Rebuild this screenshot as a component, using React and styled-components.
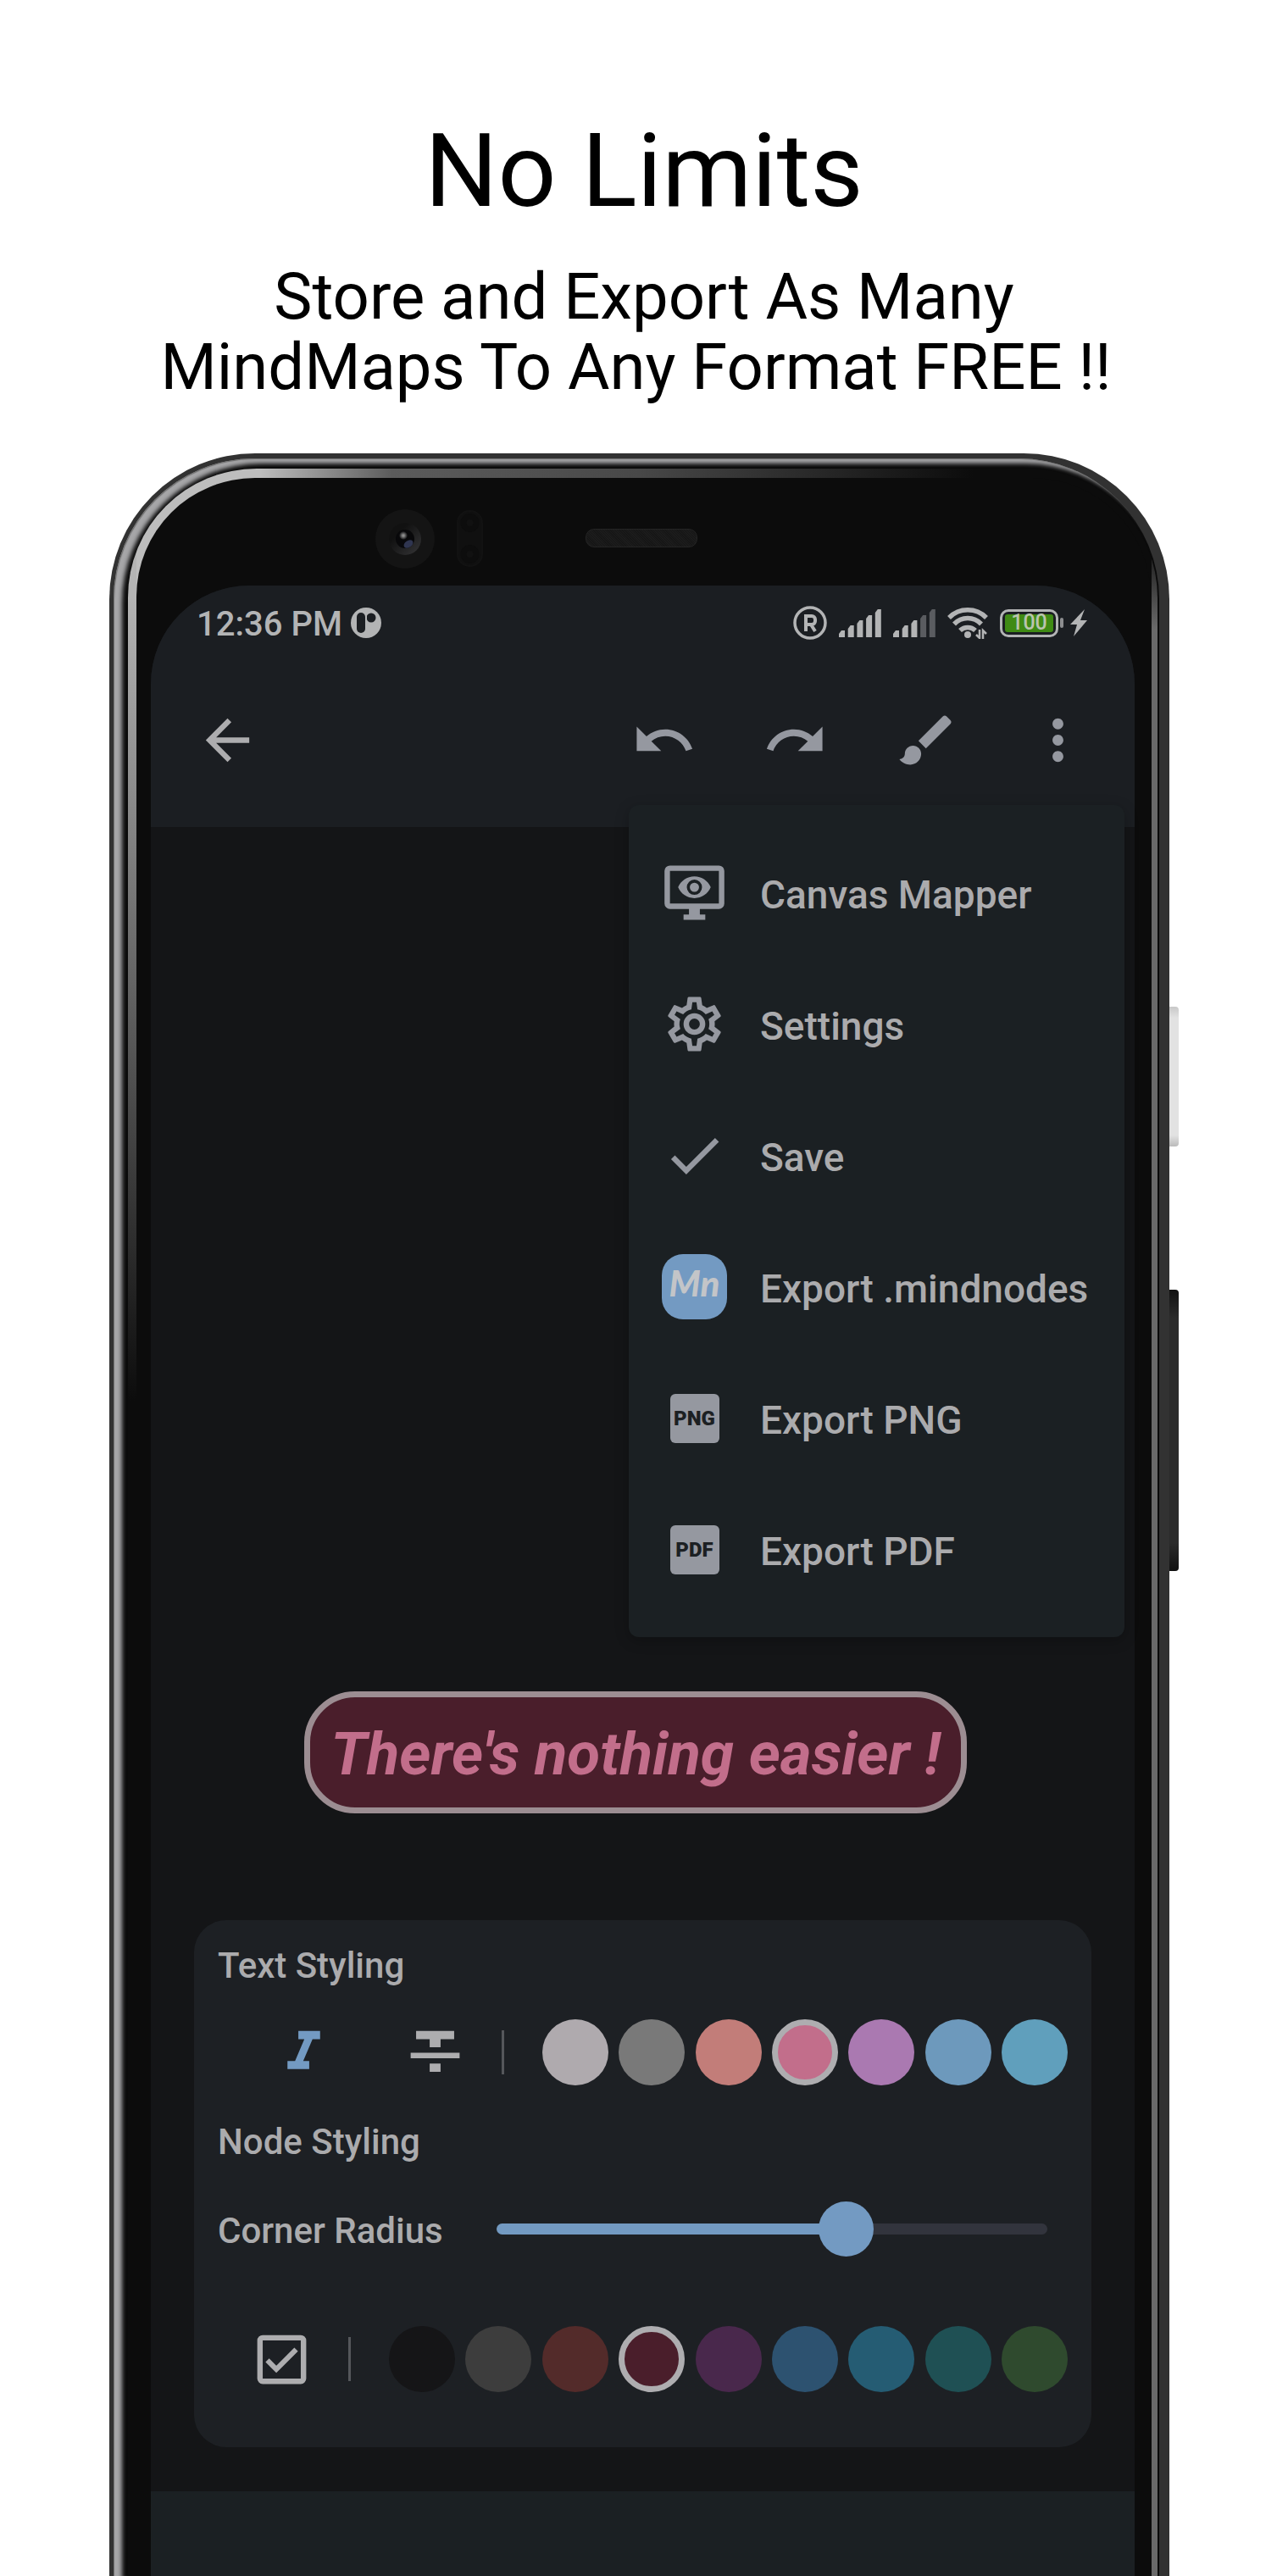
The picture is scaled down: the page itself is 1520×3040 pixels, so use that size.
import React, { useState } from "react";
import styled, { createGlobalStyle, css } from "styled-components";
import {
  MdArrowBack,
  MdUndo,
  MdRedo,
  MdBrush,
  MdMoreVert,
  MdCheck,
  MdFormatItalic,
  MdFormatStrikethrough,
} from "react-icons/md";

const color = {
  bar: "#1b1e22",
  canvas: "#141517",
  menu: "#1b2023",
  panel: "#1d2024",
  icon: "#9598a0",
  text: "#ababad",
  accent: "#739ac2",
};

const GlobalStyle = createGlobalStyle`
  *, *::before, *::after { box-sizing: border-box; }
  body { margin: 0; background: #fff; font-family: Roboto, "Noto Sans", sans-serif; }
  button { font: inherit; color: inherit; background: none; border: 0; padding: 0; cursor: pointer; }
`;

/* ---------- page ---------- */

const Page = styled.div`
  min-height: 100vh;
  display: flex;
  flex-direction: column;
  overflow: hidden;
`;

const Hero = styled.header`
  padding: 130px 40px 0;
  text-align: center;
  color: #000;
`;

const Title = styled.h1`
  margin: 0;
  font-size: 121px;
  line-height: 144px;
  font-weight: 400;
`;

const Subtitle = styled.p`
  margin: 35px 0 0;
  font-size: 76px;
  line-height: 83px;
`;

/* ---------- phone ---------- */

const Device = styled.div`
  flex: 1;
  display: flex;
  padding: 0 129px;
  margin-top: 60px;
`;

const Shell = styled.div`
  flex: 1;
  min-width: 0;
  display: flex;
  padding: 6px 12px 0 5px;
  border-radius: 172px 172px 0 0;
  background: #323232;
`;

const Rim = styled.div`
  flex: 1;
  min-width: 0;
  display: flex;
  padding: 12px 2px 0 17px;
  border-radius: 166px 166px 0 0;
  background: #0a0a0a;
  box-shadow: inset 1px 1px 1px #707070, inset 9px 5px 5px 1px #a6a6a8;
`;

const Reflection = styled.div`
  flex: 1;
  min-width: 0;
  display: flex;
  padding: 11px 8px 0 10px;
  border-radius: 152px 152px 0 0;
  background:
    linear-gradient(to bottom, #b4b4b4 150px, #808080 450px, #0c0c0c 1100px) 0 0 / 10px 100% no-repeat,
    linear-gradient(to bottom, transparent 80px, #6a6a6a 190px) 100% 0 / 7px 100% no-repeat,
    radial-gradient(1040px 1060px at 0 0, #bdbdbd 15%, #5c5c5c 30%, #484848 58%, #0c0c0c 96%),
    #0c0c0c;
`;

const Glass = styled.div`
  flex: 1;
  min-width: 0;
  display: flex;
  flex-direction: column;
  padding: 0 19px 0 17px;
  border-radius: 140px 140px 0 0;
  background: #0c0c0c;
`;

const SensorBar = styled.div`
  height: 127px;
  display: grid;
  grid-template-columns: 1fr auto 1fr;
  align-items: center;
  padding: 0 4px 4px 0;
`;

const CameraGroup = styled.div`
  display: flex;
  justify-content: flex-end;
  align-items: center;
  gap: 26px;
  padding: 20px 121px 0 0;
`;

const SpeakerGrille = styled.div`
  width: 132px;
  height: 22px;
  margin-top: 18px;
  border-radius: 10px;
  border: 1px solid #242424;
  background: repeating-linear-gradient(45deg, #1c1c1c 0 1px, #161616 1px 2px);
`;

const SideKeys = styled.div`
  width: 11px;
  display: flex;
  flex-direction: column;
  gap: 169px;
  padding-top: 653px;
`;

const SideKey = styled.span`
  display: block;
  height: ${(p) => p.$height}px;
  border-radius: 0 4px 4px 0;
  background: ${(p) => p.$background};
`;

const Screen = styled.main`
  flex: 1;
  display: flex;
  flex-direction: column;
  position: relative;
  border-radius: 116px 116px 0 0;
  background: ${color.canvas};
`;

/* ---------- status bar and toolbar ---------- */

const TopBar = styled.div`
  display: flex;
  flex-direction: column;
  height: 285px;
  border-radius: 116px 116px 0 0;
  background: ${color.bar};
`;

const StatusBar = styled.div`
  height: 80px;
  padding: 8px 56px 0 54px;
  display: flex;
  justify-content: space-between;
  align-items: center;
  color: #b3b4b5;
`;

const StatusGroup = styled.div`
  display: flex;
  align-items: center;
  gap: ${(p) => p.$gap}px;
`;

const Clock = styled.span`
  padding-top: 4px;
  font-size: 40px;
  line-height: 48px;
  font-weight: 500;
`;

const Battery = styled.span`
  width: 69px;
  height: 33px;
  padding: 3px;
  border: 3px solid #b3b4b5;
  border-radius: 10px;
  display: flex;
`;

const BatteryLevel = styled.span`
  flex: 1;
  display: flex;
  align-items: center;
  justify-content: center;
  border-radius: 3px;
  background: #3f8a14;
  color: #b9c4ae;
  font-size: 25px;
  line-height: 20px;
  font-weight: 500;
`;

const BatteryTip = styled.span`
  width: 4px;
  height: 12px;
  margin: 0 8px 0 2px;
  border-radius: 2px;
  background: #8d8e90;
`;

const BatteryGroup = styled.span`
  display: flex;
  align-items: center;
`;

const Toolbar = styled.nav`
  flex: 1;
  display: flex;
  align-items: center;
  justify-content: space-between;
  padding: 0 52px;
  color: ${color.icon};
`;

const ToolGroup = styled.div`
  display: flex;
  gap: 78px;
`;

const IconButton = styled.button`
  width: 77px;
  height: 77px;
  display: flex;
  color: ${(p) => p.$color || "inherit"};
  svg { width: 77px; height: 77px; }
`;

/* ---------- overflow menu ---------- */

const Menu = styled.ul`
  position: absolute;
  top: 259px;
  right: 12px;
  width: 585px;
  margin: 0;
  padding: 26px 0;
  list-style: none;
  border-radius: 12px;
  background: ${color.menu};
  box-shadow: 0 4px 16px rgba(0, 0, 0, 0.25);
`;

const MenuButton = styled.button`
  width: 100%;
  height: 155px;
  display: flex;
  align-items: center;
  gap: 39px;
  padding: 0 39px;
  text-align: left;
  color: ${color.text};
  white-space: nowrap;
`;

const MenuText = styled.span`
  padding-top: 4px;
  font-size: 46px;
  line-height: 56px;
  font-weight: 500;
`;

const MenuIcon = styled.span`
  width: 77px;
  height: 77px;
  flex: none;
  display: flex;
  align-items: center;
  justify-content: center;
  color: ${color.icon};
  > svg { width: 77px; height: 77px; }
`;

const AppLogo = styled.span`
  width: 77px;
  height: 77px;
  display: flex;
  align-items: center;
  justify-content: center;
  padding-bottom: 10px;
  border-radius: 25px;
  background: #739ac2;
  color: #c3c5c8;
  font-family: Lato, sans-serif;
  font-size: 42px;
  line-height: 48px;
  font-weight: 900;
  font-style: italic;
`;

const FileBadge = styled.span`
  width: 58px;
  height: 58px;
  display: flex;
  align-items: center;
  justify-content: center;
  border-radius: 6px;
  background: ${color.icon};
  color: #1c2023;
  font-size: 24px;
  line-height: 28px;
  font-weight: 900;
`;

/* ---------- canvas ---------- */

const Canvas = styled.section`
  flex: 1;
  display: flex;
  flex-direction: column;
  padding: 1020px 51px 51px;
`;

const MindNode = styled.div`
  align-self: center;
  margin: 0 17px 126px 0;
  padding: 38px 24px 34px;
  border: 7px solid #9c8d92;
  border-radius: 60px;
  background: #4a1e2b;
  color: #c26e8b;
  font-size: 71px;
  line-height: 58px;
  font-weight: 700;
  font-style: italic;
  white-space: nowrap;
`;

const StylePanel = styled.section`
  display: flex;
  flex-direction: column;
  gap: 2px;
  padding: 20px 28px 22px;
  border-radius: 38px;
  background: ${color.panel};
  color: ${color.text};
`;

const labelText = css`
  margin: 0;
  font-size: 42px;
  line-height: 60px;
  font-weight: 500;
`;

const PanelHeading = styled.h2`
  ${labelText}
  padding-top: 4px;
`;

const PanelRow = styled.div`
  height: ${(p) => p.$height}px;
  display: flex;
  align-items: center;
  justify-content: flex-end;
`;

const FormatGroup = styled.div`
  display: flex;
  gap: 78px;
  margin-right: 40px;
`;

const Divider = styled.span`
  width: 3px;
  height: 52px;
  margin-right: 45px;
  background: #55575b;
`;

const Swatches = styled.div`
  width: ${(p) => p.$width}px;
  display: flex;
  justify-content: space-between;
`;

const Swatch = styled.button`
  width: 78px;
  height: 78px;
  border-radius: 50%;
  background: ${(p) => p.$color};
  border: ${(p) => (p.$selected ? "7px solid #aeadb0" : "0")};
`;

const SliderLabel = styled.label`
  ${labelText}
  padding-top: 6px;
  margin-right: auto;
`;

const Slider = styled.input`
  appearance: none;
  width: 650px;
  height: 65px;
  margin: 0 24px 0 0;
  background: none;
  cursor: pointer;

  &::-webkit-slider-runnable-track {
    height: 13px;
    border-radius: 7px;
    background: linear-gradient(to right, ${color.accent} 64%, #32343d 64%);
  }
  &::-webkit-slider-thumb {
    appearance: none;
    width: 65px;
    height: 65px;
    margin-top: -26px;
    border-radius: 50%;
    background: ${color.accent};
  }
`;

const CheckLabel = styled.label`
  position: relative;
  width: 77px;
  height: 77px;
  margin-right: 40px;
  color: #adadaf;
  svg { display: block; width: 77px; height: 77px; }
`;

const CheckInput = styled.input`
  position: absolute;
  inset: 0;
  width: 100%;
  height: 100%;
  margin: 0;
  opacity: 0;
  cursor: pointer;
`;

const BottomBar = styled.footer`
  height: 100px;
  background: ${color.menu};
`;

/* ---------- drawings ---------- */

const Camera = () => (
  <svg width="70" height="70" viewBox="0 0 70 70" aria-hidden="true">
    <defs>
      <linearGradient id="lens" x1="0" y1="0" x2="1" y2="1">
        <stop offset="0.3" stopColor="#111" />
        <stop offset="1" stopColor="#363638" />
      </linearGradient>
      <radialGradient id="glint">
        <stop offset="0.2" stopColor="#8c8c8c" />
        <stop offset="1" stopColor="#0a0a0c" />
      </radialGradient>
    </defs>
    <circle cx="35" cy="35" r="35" fill="#141414" />
    <circle cx="35" cy="35" r="19" fill="url(#lens)" />
    <circle cx="35" cy="35" r="11" fill="#08080a" />
    <circle cx="33" cy="31" r="5" fill="url(#glint)" />
    <ellipse cx="39" cy="41" rx="6" ry="4" fill="#2f3550" transform="rotate(-35 39 41)" />
  </svg>
);

const Sensor = () => (
  <svg width="31" height="67" viewBox="0 0 31 67" aria-hidden="true">
    <rect x="1" y="1" width="29" height="65" rx="14" fill="#101010" stroke="#121212" strokeWidth="2" />
    <circle cx="15.500" cy="15" r="11" fill="#0d0d0d" />
    <circle cx="15.500" cy="52" r="11" fill="#0d0d0d" />
    <circle cx="15.500" cy="15" r="4" fill="#111111" />
    <circle cx="15.500" cy="52" r="4" fill="#111111" />
  </svg>
);

const CarrierDisc = () => (
  <svg width="36" height="36" viewBox="0 0 36 36" aria-hidden="true">
    <circle cx="18" cy="18" r="18" fill="currentColor" />
    <rect x="7" y="6" width="10" height="24" rx="5" fill={color.bar} />
    <circle cx="24" cy="12" r="5.500" fill={color.bar} />
    <path d="M17 6h2v24h-2z" fill="currentColor" />
  </svg>
);

const Registered = () => (
  <svg width="40" height="40" viewBox="0 0 40 40" fill="none" stroke="currentColor" strokeWidth="3.500" aria-hidden="true">
    <circle cx="20" cy="20" r="18" />
    <path d="M15 30V12h7a4 4 0 0 1 4 4v2a4 4 0 0 1-4 4h-7m6 0 5 8" strokeWidth="4" />
  </svg>
);

const Signal = ({ level }) => (
  <svg width="50" height="34" viewBox="0 0 50 34" aria-hidden="true">
    {[8, 14, 20, 26, 33].map((h, i) => (
      <path
        key={h}
        d={`M${i * 10.7} 34v-${h - 4}l3-4h4v${h}z`}
        fill={i < level ? "currentColor" : "#5a5c60"}
      />
    ))}
  </svg>
);

const Wifi = () => (
  <svg width="48" height="38" viewBox="0 0 48 38" fill="none" stroke="currentColor" strokeWidth="5.500" aria-hidden="true">
    <path d="M2 13a31 31 0 0 1 44 0" />
    <path d="M8 20.500a22 22 0 0 1 32 0" />
    <path d="M15 28a13 13 0 0 1 18 0" />
    <circle cx="24" cy="33" r="4" fill="currentColor" stroke="none" />
    <path d="M38 27v10l-4-4M42 38V28l4 4" strokeWidth="2.500" />
  </svg>
);

const Bolt = () => (
  <svg width="20" height="32" viewBox="0 0 20 32" aria-hidden="true">
    <path d="M17 0 0 18h8L4 32 20 13h-8z" fill="currentColor" />
  </svg>
);

const MonitorEye = () => (
  <svg viewBox="0 0 24 24" fill="currentColor" aria-hidden="true">
    <path
      fillRule="evenodd"
      d="M3 2h18a2 2 0 0 1 2 2v12a2 2 0 0 1-2 2h-7v2h2v2H8v-2h2v-2H3a2 2 0 0 1-2-2V4a2 2 0 0 1 2-2zm0 2v12h18V4z"
    />
    <path
      fillRule="evenodd"
      d="M6 10c1-2.400 3.300-4 6-4s5 1.600 6 4c-1 2.400-3.300 4-6 4s-5-1.600-6-4zm6-2.800a2.800 2.800 0 1 0 0 5.600 2.800 2.800 0 0 0 0-5.600z"
    />
    <circle cx="12" cy="10" r="1.700" />
  </svg>
);

const Cog = () => (
  <svg viewBox="0 0 24 24" fill="currentColor" aria-hidden="true">
    <path d="M12 8a4 4 0 0 1 4 4 4 4 0 0 1-4 4 4 4 0 0 1-4-4 4 4 0 0 1 4-4m0 2a2 2 0 0 0-2 2 2 2 0 0 0 2 2 2 2 0 0 0 2-2 2 2 0 0 0-2-2m-2 12c-.25 0-.46-.18-.5-.42l-.37-2.65c-.63-.25-1.17-.59-1.69-.99l-2.49 1.01c-.22.08-.49 0-.61-.22l-2-3.46a.493.493 0 0 1 .12-.64l2.110-1.660L4.500 12l.07-1-2.110-1.630a.493.493 0 0 1-.12-.64l2-3.460c.12-.22.39-.31.61-.22l2.490 1c.52-.39 1.060-.73 1.690-.98l.37-2.650c.04-.24.25-.42.5-.42h4c.25 0 .46.18.5.42l.37 2.650c.63.25 1.170.59 1.690.98l2.490-1c.22-.09.49 0 .61.22l2 3.460c.13.22.07.49-.12.64L19.430 11l.07 1-.07 1 2.110 1.630c.19.15.25.42.12.64l-2 3.460c-.12.22-.39.31-.61.22l-2.490-1c-.52.39-1.060.73-1.690.98l-.37 2.650c-.04.24-.25.42-.5.42h-4m1.250-18-.37 2.610c-1.200.25-2.260.89-3.030 1.780L5.440 7.350l-.75 1.300L6.800 10.200a5.550 5.550 0 0 0 0 3.600l-2.120 1.560.75 1.300 2.430-1.040c.77.88 1.820 1.520 3.010 1.760l.37 2.620h1.520l.37-2.610c1.190-.25 2.240-.89 3.010-1.770l2.430 1.040.75-1.300-2.120-1.550c.4-1.170.4-2.440 0-3.610l2.110-1.550-.75-1.300-2.410 1.040a5.420 5.420 0 0 0-3.030-1.770L12.750 4h-1.500z" />
  </svg>
);

const CheckBoxIcon = ({ checked }) => (
  <svg viewBox="0 0 24 24" fill="none" stroke="currentColor" strokeWidth="2" aria-hidden="true">
    <rect x="4" y="4" width="16" height="16" rx="1" />
    {checked && <path d="m6.700 12.300 3.300 3.300 7.300-7.300" strokeWidth="1.900" />}
  </svg>
);

/* ---------- data ---------- */

const menuItems = [
  { label: "Canvas Mapper", icon: <MonitorEye /> },
  { label: "Settings", icon: <Cog /> },
  { label: "Save", icon: <MdCheck /> },
  { label: "Export .mindnodes", icon: <AppLogo>Mn</AppLogo> },
  { label: "Export PNG", icon: <FileBadge>PNG</FileBadge> },
  { label: "Export PDF", icon: <FileBadge>PDF</FileBadge> },
];

const textColors = ["#afaaae", "#797979", "#c27d79", "#c26e8b", "#aa79b1", "#6d99bc", "#609fbc"];

const nodeColors = [
  "#151517", "#3d3d3d", "#532b2a", "#4a1e2b", "#49284c", "#2d5270", "#255c73", "#1f5054", "#2f4a2e",
];

const ColorPicker = ({ colors, value, onChange, name, width }) => (
  <Swatches role="group" aria-label={name} $width={width}>
    {colors.map((c) => (
      <Swatch
        key={c}
        type="button"
        $color={c}
        $selected={c === value}
        aria-label={c}
        aria-pressed={c === value}
        onClick={() => onChange(c)}
      />
    ))}
  </Swatches>
);

export default function App() {
  const [textColor, setTextColor] = useState(textColors[3]);
  const [nodeColor, setNodeColor] = useState(nodeColors[3]);
  const [filled, setFilled] = useState(true);

  return (
    <Page>
      <GlobalStyle />
      <Hero>
        <Title>No Limits</Title>
        <Subtitle>
          Store and Export As Many
          <br />
          MindMaps To Any Format FREE !!&nbsp;
        </Subtitle>
      </Hero>

      <Device>
        <Shell>
          <Rim>
            <Reflection>
              <Glass>
                <SensorBar>
                  <CameraGroup>
                    <Camera />
                    <Sensor />
                  </CameraGroup>
                  <SpeakerGrille />
                </SensorBar>

                <Screen>
                  <TopBar>
                    <StatusBar>
                      <StatusGroup $gap={10}>
                        <Clock>12:36 PM</Clock>
                        <CarrierDisc />
                      </StatusGroup>
                      <StatusGroup $gap={14}>
                        <Registered />
                        <Signal level={5} />
                        <Signal level={3} />
                        <Wifi />
                        <BatteryGroup>
                          <Battery>
                            <BatteryLevel>100</BatteryLevel>
                          </Battery>
                          <BatteryTip />
                          <Bolt />
                        </BatteryGroup>
                      </StatusGroup>
                    </StatusBar>
                    <Toolbar>
                      <IconButton type="button" aria-label="Back" $color="#adadaf">
                        <MdArrowBack />
                      </IconButton>
                      <ToolGroup>
                        <IconButton type="button" aria-label="Undo"><MdUndo /></IconButton>
                        <IconButton type="button" aria-label="Redo"><MdRedo /></IconButton>
                        <IconButton type="button" aria-label="Style"><MdBrush /></IconButton>
                        <IconButton type="button" aria-label="More"><MdMoreVert /></IconButton>
                      </ToolGroup>
                    </Toolbar>
                  </TopBar>

                  <Canvas>
                    <MindNode>There's nothing easier !</MindNode>

                    <StylePanel>
                      <PanelHeading>Text Styling</PanelHeading>
                      <PanelRow $height={140}>
                        <FormatGroup>
                          <IconButton type="button" aria-label="Italic" $color={color.accent}>
                            <MdFormatItalic />
                          </IconButton>
                          <IconButton type="button" aria-label="Strikethrough" $color="#adadaf">
                            <MdFormatStrikethrough />
                          </IconButton>
                        </FormatGroup>
                        <Divider />
                        <ColorPicker
                          name="Text colour"
                          width={620}
                          colors={textColors}
                          value={textColor}
                          onChange={setTextColor}
                        />
                      </PanelRow>

                      <PanelHeading>Node Styling</PanelHeading>
                      <PanelRow $height={140}>
                        <SliderLabel htmlFor="corner-radius">Corner Radius</SliderLabel>
                        <Slider id="corner-radius" type="range" min="0" max="100" defaultValue="65" />
                      </PanelRow>
                      <PanelRow $height={164}>
                        <CheckLabel>
                          <CheckInput
                            type="checkbox"
                            aria-label="Fill node"
                            checked={filled}
                            onChange={(e) => setFilled(e.target.checked)}
                          />
                          <CheckBoxIcon checked={filled} />
                        </CheckLabel>
                        <Divider />
                        <ColorPicker
                          name="Node colour"
                          width={801}
                          colors={nodeColors}
                          value={nodeColor}
                          onChange={setNodeColor}
                        />
                      </PanelRow>
                    </StylePanel>
                  </Canvas>
                  <BottomBar />

                  <Menu>
                    {menuItems.map(({ label, icon }) => (
                      <li key={label}>
                        <MenuButton type="button">
                          <MenuIcon>{icon}</MenuIcon>
                          <MenuText>{label}</MenuText>
                        </MenuButton>
                      </li>
                    ))}
                  </Menu>
                </Screen>
              </Glass>
            </Reflection>
          </Rim>
        </Shell>
        <SideKeys>
          <SideKey $height={165} $background="linear-gradient(#c8c8c8, #e2e2e2 8%, #e2e2e2 92%, #bbb)" />
          <SideKey $height={332} $background="linear-gradient(#111, #2b2b2b 10%, #2b2b2b 90%, #111)" />
        </SideKeys>
      </Device>
    </Page>
  );
}
